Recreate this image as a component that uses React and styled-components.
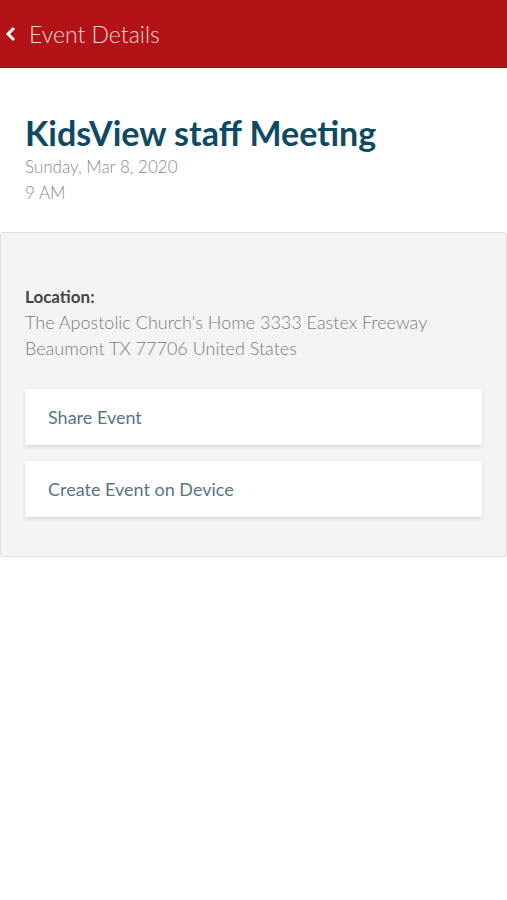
import React from "react";
import styled, { createGlobalStyle } from "styled-components";

const GlobalStyle = createGlobalStyle`
  body {
    margin: 0;
    background: #ffffff;
    font-family: Lato, "Open Sans", sans-serif;
  }
`;

const Header = styled.header`
  height: 67px;
  background: #b31217;
  border-bottom: 1px solid #9c1014;
  display: flex;
  align-items: center;
  gap: 12px;
  padding: 0 0 0 5px;
  color: #f6d6d6;
  font-size: 23px;
  font-weight: 300;
`;

const BackIcon = styled.svg`
  width: 12px;
  height: 16px;
`;

const Intro = styled.section`
  padding: 44px 25px 0;
`;

const Title = styled.h1`
  margin: 0;
  font-size: 34px;
  font-weight: 700;
  color: #0f4a64;
  line-height: 42px;
`;

const Meta = styled.div`
  font-size: 17px;
  color: #8a8a8a;
  line-height: 26px;
  font-weight: 300;
`;

const Panel = styled.section`
  margin-top: 26px;
  background: #f4f4f4;
  border: 1px solid #dedede;
  border-radius: 3px;
  padding: 52px 24px 39px;
`;

const Label = styled.div`
  font-size: 17px;
  font-weight: 700;
  color: #444;
  line-height: 24px;
`;

const Address = styled.div`
  font-size: 18px;
  color: #7a7a7a;
  line-height: 26px;
  font-weight: 300;
  margin-bottom: 28px;
`;

const Actions = styled.div`
  display: flex;
  flex-direction: column;
  gap: 16px;
`;

const ActionButton = styled.div`
  height: 56px;
  background: #ffffff;
  box-shadow: 0 2px 4px rgba(0, 0, 0, 0.12);
  display: flex;
  align-items: center;
  padding-left: 23px;
  font-size: 18px;
  color: #587580;
  font-weight: 400;
`;

export default function App() {
  return (
    <>
      <GlobalStyle />
      <Header>
        <BackIcon viewBox="0 0 12 16">
          <path d="M9 2 L3 8 L9 14" fill="none" stroke="#ffffff" strokeWidth="3" />
        </BackIcon>
        Event Details
      </Header>
      <Intro>
        <Title>KidsView staff Meeting</Title>
        <Meta>Sunday, Mar 8, 2020</Meta>
        <Meta>9 AM</Meta>
      </Intro>
      <Panel>
        <Label>Location:</Label>
        <Address>
          The Apostolic Church's Home 3333 Eastex Freeway
          <br />
          Beaumont TX 77706 United States
        </Address>
        <Actions>
          <ActionButton>Share Event</ActionButton>
          <ActionButton>Create Event on Device</ActionButton>
        </Actions>
      </Panel>
    </>
  );
}
